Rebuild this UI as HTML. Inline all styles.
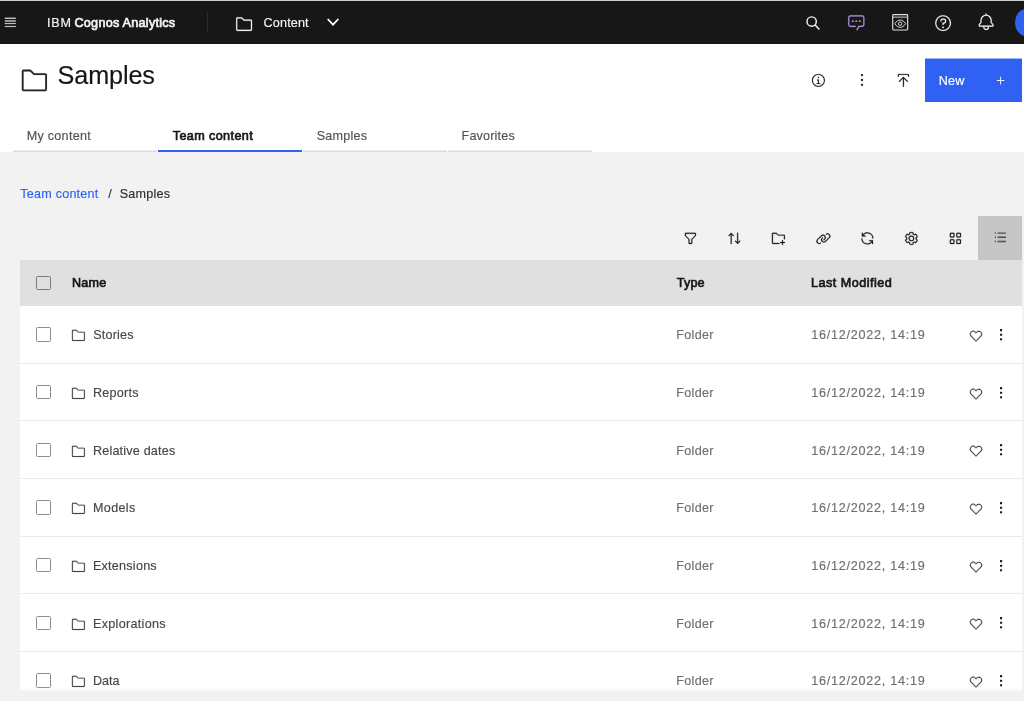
<!DOCTYPE html>
<html lang="en">
<head>
<meta charset="utf-8">
<title>Samples - IBM Cognos Analytics</title>
<style>
*{box-sizing:border-box;margin:0;padding:0}
html,body{width:1024px;height:701px;overflow:hidden;background:#f2f2f2;font-family:"Liberation Sans",sans-serif;color:#161616}
body{position:relative}
svg{display:block;position:absolute;fill:currentColor;overflow:visible}
.t{position:absolute;white-space:nowrap;line-height:1}
.b{position:absolute}
.cb{position:absolute;left:36px;width:14.8px;height:14.3px;border:1px solid #8d8d8d;border-radius:1.5px;background:#fff}
</style>
</head>
<body>
<div class="b" style="left:0;top:0;width:1024px;height:1.2px;background:#cfcfcf"></div>
<div class="b" id="hdr" style="left:0;top:1.2px;width:1024px;height:42.4px;background:#171717"></div>
<div class="b" id="white" style="left:0;top:43.6px;width:1024px;height:108.4px;background:#fff"></div>
<div class="b" style="left:207.3px;top:11.9px;width:1px;height:21px;background:#2c2c2c"></div>
<svg viewBox="0 0 32 32" width="14.6" height="14.6" style="left:3.35px;top:15.20px;color:#f4f4f4;stroke:currentColor;stroke-width:0.3"><path d="M4 6H28V8H4zM4 24H28V26H4zM4 12H28V14H4zM4 18H28V20H4z"/></svg>
<svg viewBox="0 0 32 32" width="18.2" height="18.2" style="left:234.80px;top:14.55px;color:#f4f4f4;stroke:currentColor;stroke-width:0.3"><path d="M11.1716,6l3.4142,3.4142L15.1716,10H28V26H4V6h7.1716m0-2H4A2,2,0,0,0,2,6V26a2,2,0,0,0,2,2H28a2,2,0,0,0,2-2V10a2,2,0,0,0-2-2H16L12.5858,4.5858A2,2,0,0,0,11.1716,4Z"/></svg>
<svg viewBox="0 0 14 10" width="14" height="10" style="left:326px;top:17.3px;color:#fff;fill:none"><polyline points="1.7,2 7,7.6 12.3,2" stroke="currentColor" stroke-width="1.8" fill="none"/></svg>
<svg viewBox="0 0 16 16" width="16" height="16" style="left:805px;top:14.5px;color:#f4f4f4;fill:none"><circle cx="6.65" cy="6.5" r="4.65" stroke="currentColor" stroke-width="1.45" fill="none"/><line x1="9.9" y1="9.8" x2="14.4" y2="14.4" stroke="currentColor" stroke-width="1.5"/></svg>
<svg viewBox="0 0 32 32" width="18.6" height="18.6" style="left:847.10px;top:13.00px;color:#ab93dc;stroke:currentColor;stroke-width:0.3"><path d="M17.74,30,16,29l4-7h6a2,2,0,0,0,2-2V8a2,2,0,0,0-2-2H6A2,2,0,0,0,4,8V20a2,2,0,0,0,2,2h9v2H6a4,4,0,0,1-4-4V8A4,4,0,0,1,6,4H26a4,4,0,0,1,4,4V20a4,4,0,0,1-4,4H21.16Z"/><circle cx="10" cy="14" r="1.6"/><circle cx="16" cy="14" r="1.6"/><circle cx="22" cy="14" r="1.6"/></svg>
<svg viewBox="0 0 32 32" width="18.4" height="18.4" style="left:890.80px;top:13.40px;color:#e0e0e0;stroke:currentColor;stroke-width:0.5"><g fill="none" stroke="currentColor" stroke-width="2"><rect x="3" y="2.8" width="26" height="26.7" rx="1.5"/><line x1="3" y1="7.2" x2="29" y2="7.2" stroke-width="1.6"/><path d="M6.6 18.6C9.5 13.8 13 12.3 16 12.3S22.5 13.8 25.4 18.6C22.5 23.4 19 24.900 16 24.900S9.5 23.4 6.6 18.600Z" stroke-width="1.7"/><circle cx="16" cy="18.6" r="3" stroke-width="1.7"/></g></svg>
<svg viewBox="0 0 32 32" width="18.2" height="18.2" style="left:933.90px;top:13.75px;color:#f4f4f4;stroke:currentColor;stroke-width:0.2"><path d="M16,2A14,14,0,1,0,30,16,14,14,0,0,0,16,2Zm0,26A12,12,0,1,1,28,16,12,12,0,0,1,16,28Z"/><circle cx="16" cy="23.5" r="1.5"/><path d="M17,8H15.5A4.49,4.49,0,0,0,11,12.5V13h2v-.5A2.5,2.5,0,0,1,15.5,10H17a2.5,2.5,0,0,1,0,5H15v4.5h2V17a4.5,4.5,0,0,0,0-9Z"/></svg>
<svg viewBox="0 0 32 32" width="18.2" height="18.2" style="left:976.70px;top:13.45px;color:#f4f4f4;stroke:currentColor;stroke-width:0.2"><path d="M28.7071,19.293,26,16.5859V13a10.0136,10.0136,0,0,0-9-9.9492V1H15V3.0508A10.0136,10.0136,0,0,0,6,13v3.5859L3.2929,19.293A1,1,0,0,0,3,20v3a1,1,0,0,0,1,1h7v.7768a5.152,5.152,0,0,0,4.5,5.1987A5.0057,5.0057,0,0,0,21,25V24h7a1,1,0,0,0,1-1V20A1,1,0,0,0,28.7071,19.293ZM19,25a3,3,0,0,1-6,0V24h6Zm8-3H5V20.4141L7.707,17.707A1,1,0,0,0,8,17V13a8,8,0,0,1,16,0v4a1,1,0,0,0,.293.707L27,20.4141Z"/></svg>
<div class="b" style="left:1014.7px;top:7.9px;width:28.8px;height:28.8px;border-radius:50%;background:#2f62f3"></div>
<svg viewBox="0 0 32 32" width="28.8" height="28.8" style="left:20.05px;top:65.65px;color:#262626;stroke:currentColor;stroke-width:0.1"><path d="M11.1716,6l3.4142,3.4142L15.1716,10H28V26H4V6h7.1716m0-2H4A2,2,0,0,0,2,6V26a2,2,0,0,0,2,2H28a2,2,0,0,0,2-2V10a2,2,0,0,0-2-2H16L12.5858,4.5858A2,2,0,0,0,11.1716,4Z"/></svg>
<svg viewBox="0 0 32 32" width="14.8" height="14.8" style="left:811.20px;top:72.90px;color:#161616;stroke:currentColor;stroke-width:0.3"><path d="M17 22L17 14 13 14 13 16 15 16 15 22 12 22 12 24 20 24 20 22 17 22zM16 8a1.5 1.5 0 1 0 1.5 1.5A1.5 1.5 0 0 0 16 8z"/><path d="M16,30A14,14,0,1,1,30,16,14,14,0,0,1,16,30ZM16,4A12,12,0,1,0,28,16,12,12,0,0,0,16,4Z"/></svg>
<svg viewBox="0 0 4 14" width="4" height="14" style="left:859.9px;top:73.2px;color:#161616"><circle cx="2" cy="2.1" r="1.15"/><circle cx="2" cy="7.0" r="1.15"/><circle cx="2" cy="11.8" r="1.15"/></svg>
<svg viewBox="0 0 32 32" width="14.8" height="14.8" style="left:896.10px;top:72.90px;color:#161616;stroke:currentColor;stroke-width:0.5"><path d="M6 18L7.41 19.41 15 11.83 15 30 17 30 17 11.83 24.59 19.41 26 18 16 8 6 18zM6 8V4H26V8h2V4a2 2 0 0 0-2-2H6A2 2 0 0 0 4 4V8z"/></svg>
<svg viewBox="0 0 97 45" width="97" height="45" style="left:925px;top:58px;color:#2f62f3"><rect x="0" y="0.55" width="97" height="43.45"/></svg>
<svg viewBox="0 0 32 32" width="15.2" height="15.2" style="left:992.50px;top:72.80px;color:#f0f3ff;stroke:currentColor;stroke-width:0"><path d="M17 15L17 8 15 8 15 15 8 15 8 17 15 17 15 24 17 24 17 17 24 17 24 15z"/></svg>
<div class="b" style="left:13px;top:150px;width:144px;height:1px;background:#f1f1f1"></div><div class="b" style="left:13px;top:151px;width:144px;height:1px;background:#d9d9d9"></div>
<div class="b" style="left:158px;top:150px;width:144px;height:2px;background:#2f62f3"></div>
<div class="b" style="left:303px;top:150px;width:144px;height:1px;background:#f1f1f1"></div><div class="b" style="left:303px;top:151px;width:144px;height:1px;background:#d9d9d9"></div>
<div class="b" style="left:448px;top:150px;width:144px;height:1px;background:#f1f1f1"></div><div class="b" style="left:448px;top:151px;width:144px;height:1px;background:#d9d9d9"></div>
<div class="b" style="left:978px;top:216px;width:44px;height:44px;background:#c6c6c6"></div>
<svg viewBox="0 0 32 32" width="14.8" height="14.8" style="left:683.10px;top:230.50px;color:#161616;stroke:currentColor;stroke-width:0.5"><path d="M18,28H14a2,2,0,0,1-2-2V18.41L4.59,11A2,2,0,0,1,4,9.59V6A2,2,0,0,1,6,4H26a2,2,0,0,1,2,2V9.59A2,2,0,0,1,27.41,11L20,18.41V26A2,2,0,0,1,18,28ZM6,6V9.59l8,8V26h4V17.59l8-8V6Z"/></svg>
<svg viewBox="0 0 32 32" width="14.8" height="14.8" style="left:727.20px;top:230.50px;color:#161616;stroke:currentColor;stroke-width:0.5"><path d="M27.6 20.6L24 24.2 24 4 22 4 22 24.2 18.4 20.6 17 22 23 28 29 22zM9 4L3 10 4.4 11.4 8 7.8 8 28 10 28 10 7.8 13.6 11.4 15 10z"/></svg>
<svg viewBox="0 0 32 32" width="14.8" height="14.8" style="left:771.40px;top:230.50px;color:#161616;stroke:currentColor;stroke-width:0.5"><path d="M26 20L24 20 24 24 20 24 20 26 24 26 24 30 26 30 26 26 30 26 30 24 26 24z"/><path d="M28,8H16l-3.4-3.4C12.2,4.2,11.7,4,11.2,4H4C2.9,4,2,4.9,2,6v20c0,1.1,0.9,2,2,2h14v-2H4V6h7.2l3.4,3.4l0.6,0.6H28v8h2v-8C30,8.9,29.1,8,28,8z"/></svg>
<svg viewBox="0 0 32 32" width="14.8" height="14.8" style="left:815.70px;top:230.50px;color:#161616;stroke:currentColor;stroke-width:0.5"><path d="M29.25,6.76a6,6,0,0,0-8.5,0l1.42,1.42a4,4,0,1,1,5.67,5.67l-8,8a4,4,0,1,1-5.67-5.66l1.41-1.42-1.41-1.42-1.42,1.42a6,6,0,0,0,0,8.5A6,6,0,0,0,17,25a6,6,0,0,0,4.27-1.76l8-8A6,6,0,0,0,29.25,6.76Z"/><path d="M4.19,24.82a4,4,0,0,1,0-5.67l8-8a4,4,0,0,1,5.67,0A3.94,3.94,0,0,1,19,14a4,4,0,0,1-1.17,2.85L15.71,19l1.42,1.42,2.12-2.12a6,6,0,0,0-8.51-8.51l-8,8a6,6,0,0,0,0,8.51A6,6,0,0,0,7,28a6.07,6.07,0,0,0,4.28-1.76L9.86,24.82A4,4,0,0,1,4.19,24.82Z"/></svg>
<svg viewBox="0 0 32 32" width="14.8" height="14.8" style="left:860.10px;top:230.50px;color:#161616;stroke:currentColor;stroke-width:0.5"><path d="M12 10H6.78A11 11 0 0 1 27 16h2A13 13 0 0 0 6 7.68V4H4v8h8zM20 22h5.22A11 11 0 0 1 5 16H3a13 13 0 0 0 23 8.32V28h2V20H20z"/></svg>
<svg viewBox="0 0 32 32" width="14.8" height="14.8" style="left:904.30px;top:230.50px;color:#161616;stroke:currentColor;stroke-width:0.5"><path d="M27,16.76c0-.25,0-.5,0-.76s0-.51,0-.77l1.92-1.68A2,2,0,0,0,29.3,11L26.94,7a2,2,0,0,0-1.73-1,2,2,0,0,0-.64.1l-2.43.82a11.35,11.35,0,0,0-1.31-.75l-.51-2.52a2,2,0,0,0-2-1.61H13.64a2,2,0,0,0-2,1.61l-.51,2.52a11.48,11.48,0,0,0-1.32.75L7.43,6.06A2,2,0,0,0,6.79,6,2,2,0,0,0,5.06,7L2.7,11a2,2,0,0,0,.41,2.51L5,15.24c0,.25,0,.5,0,.76s0,.51,0,.77L3.11,18.45A2,2,0,0,0,2.7,21L5.06,25a2,2,0,0,0,1.73,1,2,2,0,0,0,.64-.1l2.43-.82a11.35,11.35,0,0,0,1.31.75l.51,2.52a2,2,0,0,0,2,1.61h4.72a2,2,0,0,0,2-1.61l.51-2.52a11.48,11.48,0,0,0,1.32-.75l2.42.82a2,2,0,0,0,.64.1,2,2,0,0,0,1.73-1L29.3,21a2,2,0,0,0-.41-2.51ZM25.21,24l-3.43-1.16a8.86,8.86,0,0,1-2.71,1.57L18.36,28H13.64l-.71-3.55a9.36,9.36,0,0,1-2.7-1.57L6.79,24,4.43,20l2.72-2.4a8.9,8.9,0,0,1,0-3.13L4.43,12,6.79,8l3.43,1.16a8.86,8.86,0,0,1,2.71-1.57L13.64,4h4.72l.71,3.55a9.36,9.36,0,0,1,2.7,1.57L25.21,8,27.57,12l-2.72,2.4a8.9,8.9,0,0,1,0,3.13L27.57,20Z"/><path d="M16,22a6,6,0,1,1,6-6A5.94,5.94,0,0,1,16,22Zm0-10a3.91,3.91,0,0,0-4,4,3.91,3.91,0,0,0,4,4,3.91,3.91,0,0,0,4-4A3.91,3.91,0,0,0,16,12Z"/></svg>
<svg viewBox="0 0 32 32" width="14.8" height="14.8" style="left:948.20px;top:230.50px;color:#161616;stroke:currentColor;stroke-width:0.5"><path d="M12 4H6A2 2 0 0 0 4 6v6a2 2 0 0 0 2 2h6a2 2 0 0 0 2-2V6A2 2 0 0 0 12 4zm0 8H6V6h6zM26 4H20a2 2 0 0 0-2 2v6a2 2 0 0 0 2 2h6a2 2 0 0 0 2-2V6A2 2 0 0 0 26 4zm0 8H20V6h6zM12 18H6a2 2 0 0 0-2 2v6a2 2 0 0 0 2 2h6a2 2 0 0 0 2-2V20A2 2 0 0 0 12 18zm0 8H6V20h6zM26 18H20a2 2 0 0 0-2 2v6a2 2 0 0 0 2 2h6a2 2 0 0 0 2-2V20A2 2 0 0 0 26 18zm0 8H20V20h6z"/></svg>
<svg viewBox="0 0 32 32" width="14.8" height="14.8" style="left:992.70px;top:230.35px;color:#555555;stroke:currentColor;stroke-width:0.2"><path d="M10 5.300H28V8.300H10zM10 23.300H28V26.300H10zM10 14.300H28V17.300H10zM4 14.300H6.400V17.300H4zM4 5.300H6.400V8.300H4zM4 23.300H6.400V26.300H4z"/></svg>
<div class="b" id="tbl" style="left:20px;top:260px;width:1002px;height:431.2px;background:#fff"></div>
<div class="b" id="thead" style="left:20px;top:260px;width:1002px;height:45.6px;background:#e0e0e0"></div>
<div class="cb" style="top:275.7px;background:transparent;border-color:#7a7a7a"></div>
<div class="cb" style="top:327.43px"></div>
<svg viewBox="0 0 32 32" width="14.8" height="14.8" style="left:71.25px;top:328.33px;color:#454545;stroke:currentColor;stroke-width:0.35"><path d="M11.1716,6l3.4142,3.4142L15.1716,10H28V26H4V6h7.1716m0-2H4A2,2,0,0,0,2,6V26a2,2,0,0,0,2,2H28a2,2,0,0,0,2-2V10a2,2,0,0,0-2-2H16L12.5858,4.5858A2,2,0,0,0,11.1716,4Z"/></svg>
<svg viewBox="0 0 32 32" width="14" height="14" style="left:969.00px;top:329.12px;color:#454545;stroke:currentColor;stroke-width:0.35"><path d="M22.45,6a5.47,5.47,0,0,1,3.91,1.64,5.7,5.7,0,0,1,0,8L16,26.13,5.64,15.64a5.7,5.7,0,0,1,0-8,5.48,5.48,0,0,1,7.82,0L16,10.24l2.53-2.58A5.44,5.44,0,0,1,22.45,6m0-2a7.47,7.47,0,0,0-5.340,2.240L16,7.360,14.890,6.240a7.490,7.490,0,0,0-10.680,0,7.720,7.720,0,0,0,0,10.820L16,29,27.790,17.060a7.720,7.720,0,0,0,0-10.820A7.490,7.490,0,0,0,22.450,4Z"/></svg>
<svg viewBox="0 0 4 14" width="4" height="14" style="left:999px;top:328.03px;color:#161616"><rect x="1" y="1.1" width="2.1" height="2.1" rx=".5"/><rect x="1" y="5.7" width="2.1" height="2.1" rx=".5"/><rect x="1" y="10.2" width="2.1" height="2.1" rx=".5"/></svg>
<div class="b" style="left:20px;top:362.65px;width:1002px;height:1.1px;background:#e9e9e9"></div>
<div class="cb" style="top:385.07px"></div>
<svg viewBox="0 0 32 32" width="14.8" height="14.8" style="left:71.25px;top:385.98px;color:#454545;stroke:currentColor;stroke-width:0.35"><path d="M11.1716,6l3.4142,3.4142L15.1716,10H28V26H4V6h7.1716m0-2H4A2,2,0,0,0,2,6V26a2,2,0,0,0,2,2H28a2,2,0,0,0,2-2V10a2,2,0,0,0-2-2H16L12.5858,4.5858A2,2,0,0,0,11.1716,4Z"/></svg>
<svg viewBox="0 0 32 32" width="14" height="14" style="left:969.00px;top:386.77px;color:#454545;stroke:currentColor;stroke-width:0.35"><path d="M22.45,6a5.47,5.47,0,0,1,3.91,1.64,5.7,5.7,0,0,1,0,8L16,26.13,5.64,15.64a5.7,5.7,0,0,1,0-8,5.48,5.48,0,0,1,7.82,0L16,10.24l2.53-2.58A5.44,5.44,0,0,1,22.45,6m0-2a7.47,7.47,0,0,0-5.340,2.240L16,7.360,14.890,6.240a7.490,7.490,0,0,0-10.680,0,7.720,7.720,0,0,0,0,10.820L16,29,27.790,17.060a7.720,7.720,0,0,0,0-10.820A7.490,7.490,0,0,0,22.450,4Z"/></svg>
<svg viewBox="0 0 4 14" width="4" height="14" style="left:999px;top:385.68px;color:#161616"><rect x="1" y="1.1" width="2.1" height="2.1" rx=".5"/><rect x="1" y="5.7" width="2.1" height="2.1" rx=".5"/><rect x="1" y="10.2" width="2.1" height="2.1" rx=".5"/></svg>
<div class="b" style="left:20px;top:420.30px;width:1002px;height:1.1px;background:#e9e9e9"></div>
<div class="cb" style="top:442.73px"></div>
<svg viewBox="0 0 32 32" width="14.8" height="14.8" style="left:71.25px;top:443.63px;color:#454545;stroke:currentColor;stroke-width:0.35"><path d="M11.1716,6l3.4142,3.4142L15.1716,10H28V26H4V6h7.1716m0-2H4A2,2,0,0,0,2,6V26a2,2,0,0,0,2,2H28a2,2,0,0,0,2-2V10a2,2,0,0,0-2-2H16L12.5858,4.5858A2,2,0,0,0,11.1716,4Z"/></svg>
<svg viewBox="0 0 32 32" width="14" height="14" style="left:969.00px;top:444.43px;color:#454545;stroke:currentColor;stroke-width:0.35"><path d="M22.45,6a5.47,5.47,0,0,1,3.91,1.64,5.7,5.7,0,0,1,0,8L16,26.13,5.64,15.64a5.7,5.7,0,0,1,0-8,5.48,5.48,0,0,1,7.82,0L16,10.24l2.53-2.58A5.44,5.44,0,0,1,22.45,6m0-2a7.47,7.47,0,0,0-5.340,2.240L16,7.360,14.890,6.240a7.490,7.490,0,0,0-10.680,0,7.720,7.720,0,0,0,0,10.820L16,29,27.790,17.060a7.720,7.720,0,0,0,0-10.820A7.490,7.490,0,0,0,22.450,4Z"/></svg>
<svg viewBox="0 0 4 14" width="4" height="14" style="left:999px;top:443.33px;color:#161616"><rect x="1" y="1.1" width="2.1" height="2.1" rx=".5"/><rect x="1" y="5.7" width="2.1" height="2.1" rx=".5"/><rect x="1" y="10.2" width="2.1" height="2.1" rx=".5"/></svg>
<div class="b" style="left:20px;top:477.95px;width:1002px;height:1.1px;background:#e9e9e9"></div>
<div class="cb" style="top:500.38px"></div>
<svg viewBox="0 0 32 32" width="14.8" height="14.8" style="left:71.25px;top:501.28px;color:#454545;stroke:currentColor;stroke-width:0.35"><path d="M11.1716,6l3.4142,3.4142L15.1716,10H28V26H4V6h7.1716m0-2H4A2,2,0,0,0,2,6V26a2,2,0,0,0,2,2H28a2,2,0,0,0,2-2V10a2,2,0,0,0-2-2H16L12.5858,4.5858A2,2,0,0,0,11.1716,4Z"/></svg>
<svg viewBox="0 0 32 32" width="14" height="14" style="left:969.00px;top:502.07px;color:#454545;stroke:currentColor;stroke-width:0.35"><path d="M22.45,6a5.47,5.47,0,0,1,3.91,1.64,5.7,5.7,0,0,1,0,8L16,26.13,5.64,15.64a5.7,5.7,0,0,1,0-8,5.48,5.48,0,0,1,7.82,0L16,10.24l2.53-2.58A5.44,5.44,0,0,1,22.45,6m0-2a7.47,7.47,0,0,0-5.340,2.240L16,7.360,14.890,6.240a7.490,7.490,0,0,0-10.680,0,7.720,7.720,0,0,0,0,10.820L16,29,27.790,17.060a7.720,7.720,0,0,0,0-10.820A7.490,7.490,0,0,0,22.450,4Z"/></svg>
<svg viewBox="0 0 4 14" width="4" height="14" style="left:999px;top:500.98px;color:#161616"><rect x="1" y="1.1" width="2.1" height="2.1" rx=".5"/><rect x="1" y="5.7" width="2.1" height="2.1" rx=".5"/><rect x="1" y="10.2" width="2.1" height="2.1" rx=".5"/></svg>
<div class="b" style="left:20px;top:535.60px;width:1002px;height:1.1px;background:#e9e9e9"></div>
<div class="cb" style="top:558.03px"></div>
<svg viewBox="0 0 32 32" width="14.8" height="14.8" style="left:71.25px;top:558.93px;color:#454545;stroke:currentColor;stroke-width:0.35"><path d="M11.1716,6l3.4142,3.4142L15.1716,10H28V26H4V6h7.1716m0-2H4A2,2,0,0,0,2,6V26a2,2,0,0,0,2,2H28a2,2,0,0,0,2-2V10a2,2,0,0,0-2-2H16L12.5858,4.5858A2,2,0,0,0,11.1716,4Z"/></svg>
<svg viewBox="0 0 32 32" width="14" height="14" style="left:969.00px;top:559.73px;color:#454545;stroke:currentColor;stroke-width:0.35"><path d="M22.45,6a5.47,5.47,0,0,1,3.91,1.64,5.7,5.7,0,0,1,0,8L16,26.13,5.64,15.64a5.7,5.7,0,0,1,0-8,5.48,5.48,0,0,1,7.82,0L16,10.24l2.53-2.58A5.44,5.44,0,0,1,22.45,6m0-2a7.47,7.47,0,0,0-5.340,2.240L16,7.360,14.890,6.240a7.490,7.490,0,0,0-10.680,0,7.720,7.720,0,0,0,0,10.820L16,29,27.790,17.060a7.720,7.720,0,0,0,0-10.820A7.490,7.490,0,0,0,22.450,4Z"/></svg>
<svg viewBox="0 0 4 14" width="4" height="14" style="left:999px;top:558.62px;color:#161616"><rect x="1" y="1.1" width="2.1" height="2.1" rx=".5"/><rect x="1" y="5.7" width="2.1" height="2.1" rx=".5"/><rect x="1" y="10.2" width="2.1" height="2.1" rx=".5"/></svg>
<div class="b" style="left:20px;top:593.25px;width:1002px;height:1.1px;background:#e9e9e9"></div>
<div class="cb" style="top:615.68px"></div>
<svg viewBox="0 0 32 32" width="14.8" height="14.8" style="left:71.25px;top:616.58px;color:#454545;stroke:currentColor;stroke-width:0.35"><path d="M11.1716,6l3.4142,3.4142L15.1716,10H28V26H4V6h7.1716m0-2H4A2,2,0,0,0,2,6V26a2,2,0,0,0,2,2H28a2,2,0,0,0,2-2V10a2,2,0,0,0-2-2H16L12.5858,4.5858A2,2,0,0,0,11.1716,4Z"/></svg>
<svg viewBox="0 0 32 32" width="14" height="14" style="left:969.00px;top:617.38px;color:#454545;stroke:currentColor;stroke-width:0.35"><path d="M22.45,6a5.47,5.47,0,0,1,3.91,1.64,5.7,5.7,0,0,1,0,8L16,26.13,5.64,15.64a5.7,5.7,0,0,1,0-8,5.48,5.48,0,0,1,7.82,0L16,10.24l2.53-2.58A5.44,5.44,0,0,1,22.45,6m0-2a7.47,7.47,0,0,0-5.340,2.240L16,7.360,14.890,6.240a7.490,7.490,0,0,0-10.680,0,7.720,7.720,0,0,0,0,10.820L16,29,27.790,17.060a7.720,7.720,0,0,0,0-10.820A7.490,7.490,0,0,0,22.450,4Z"/></svg>
<svg viewBox="0 0 4 14" width="4" height="14" style="left:999px;top:616.27px;color:#161616"><rect x="1" y="1.1" width="2.1" height="2.1" rx=".5"/><rect x="1" y="5.7" width="2.1" height="2.1" rx=".5"/><rect x="1" y="10.2" width="2.1" height="2.1" rx=".5"/></svg>
<div class="b" style="left:20px;top:650.90px;width:1002px;height:1.1px;background:#e9e9e9"></div>
<div class="cb" style="top:673.33px"></div>
<svg viewBox="0 0 32 32" width="14.8" height="14.8" style="left:71.25px;top:674.23px;color:#454545;stroke:currentColor;stroke-width:0.35"><path d="M11.1716,6l3.4142,3.4142L15.1716,10H28V26H4V6h7.1716m0-2H4A2,2,0,0,0,2,6V26a2,2,0,0,0,2,2H28a2,2,0,0,0,2-2V10a2,2,0,0,0-2-2H16L12.5858,4.5858A2,2,0,0,0,11.1716,4Z"/></svg>
<svg viewBox="0 0 32 32" width="14" height="14" style="left:969.00px;top:675.03px;color:#454545;stroke:currentColor;stroke-width:0.35"><path d="M22.45,6a5.47,5.47,0,0,1,3.91,1.64,5.7,5.7,0,0,1,0,8L16,26.13,5.64,15.64a5.7,5.7,0,0,1,0-8,5.48,5.48,0,0,1,7.82,0L16,10.24l2.53-2.58A5.44,5.44,0,0,1,22.45,6m0-2a7.47,7.47,0,0,0-5.340,2.240L16,7.360,14.890,6.240a7.490,7.490,0,0,0-10.680,0,7.720,7.720,0,0,0,0,10.820L16,29,27.790,17.060a7.720,7.720,0,0,0,0-10.820A7.490,7.490,0,0,0,22.450,4Z"/></svg>
<svg viewBox="0 0 4 14" width="4" height="14" style="left:999px;top:673.92px;color:#161616"><rect x="1" y="1.1" width="2.1" height="2.1" rx=".5"/><rect x="1" y="5.7" width="2.1" height="2.1" rx=".5"/><rect x="1" y="10.2" width="2.1" height="2.1" rx=".5"/></svg>
<div id="txt" style="position:absolute;left:0;top:0;width:1024px;height:701px;will-change:transform">
<div class="t" id="brand1" style="left:46.96px;top:16.88px;font-size:12.6px;font-weight:400;-webkit-text-stroke:0.16px currentColor;color:#f4f4f4;letter-spacing:0.875px">IBM</div>
<div class="t" id="brand2" style="left:74.46px;top:16.88px;font-size:12.6px;font-weight:400;-webkit-text-stroke:0.68px currentColor;color:#f4f4f4;letter-spacing:0.274px">Cognos Analytics</div>
<div class="t" id="ctx" style="left:263.60px;top:16.88px;font-size:12.6px;font-weight:400;-webkit-text-stroke:0.16px currentColor;color:#f4f4f4;letter-spacing:0.146px">Content</div>
<div class="t" id="h1" style="left:57.60px;top:63.12px;font-size:25.2px;font-weight:400;-webkit-text-stroke:0.16px currentColor;color:#161616;letter-spacing:-0.108px">Samples</div>
<div class="t" id="new" style="left:938.74px;top:74.78px;font-size:12.6px;font-weight:400;-webkit-text-stroke:0.16px currentColor;color:#ffffff;letter-spacing:0.200px">New</div>
<div class="t" id="tab1" style="left:26.77px;top:129.78px;font-size:12.6px;font-weight:400;-webkit-text-stroke:0.16px currentColor;color:#525252;letter-spacing:0.254px">My content</div>
<div class="t" id="tab2" style="left:172.78px;top:129.78px;font-size:12.6px;font-weight:400;-webkit-text-stroke:0.68px currentColor;color:#161616;letter-spacing:0.393px">Team content</div>
<div class="t" id="tab3" style="left:316.78px;top:129.78px;font-size:12.6px;font-weight:400;-webkit-text-stroke:0.16px currentColor;color:#525252;letter-spacing:0.200px">Samples</div>
<div class="t" id="tab4" style="left:461.56px;top:129.78px;font-size:12.6px;font-weight:400;-webkit-text-stroke:0.16px currentColor;color:#525252;letter-spacing:0.173px">Favorites</div>
<div class="t" id="bc1" style="left:20.24px;top:187.68px;font-size:12.6px;font-weight:400;-webkit-text-stroke:0.16px currentColor;color:#2f62f3;letter-spacing:0.221px">Team content</div>
<div class="t" id="bc2" style="left:108.19px;top:187.68px;font-size:12.6px;font-weight:400;-webkit-text-stroke:0.16px currentColor;color:#333333;letter-spacing:0.000px">/</div>
<div class="t" id="bc3" style="left:119.77px;top:187.68px;font-size:12.6px;font-weight:400;-webkit-text-stroke:0.16px currentColor;color:#2e2e2e;letter-spacing:0.195px">Samples</div>
<div class="t" id="th1" style="left:71.97px;top:277.43px;font-size:12.6px;font-weight:400;-webkit-text-stroke:0.68px currentColor;color:#161616;letter-spacing:0.256px">Name</div>
<div class="t" id="th2" style="left:676.78px;top:277.43px;font-size:12.6px;font-weight:400;-webkit-text-stroke:0.68px currentColor;color:#161616;letter-spacing:0.167px">Type</div>
<div class="t" id="th3" style="left:811.05px;top:277.43px;font-size:12.6px;font-weight:400;-webkit-text-stroke:0.68px currentColor;color:#161616;letter-spacing:0.487px">Last Modified</div>
<div class="t" id="n0" style="left:93.23px;top:329.48px;font-size:12.6px;font-weight:400;-webkit-text-stroke:0.16px currentColor;color:#474747;letter-spacing:0.170px">Stories</div>
<div class="t" id="t0" style="left:676.36px;top:329.48px;font-size:12.6px;font-weight:400;-webkit-text-stroke:0.16px currentColor;color:#6f6f6f;letter-spacing:0.268px">Folder</div>
<div class="t" id="d0" style="left:811.22px;top:329.48px;font-size:12.6px;font-weight:400;-webkit-text-stroke:0.16px currentColor;color:#6f6f6f;letter-spacing:0.744px">16/12/2022, 14:19</div>
<div class="t" id="n1" style="left:92.96px;top:387.13px;font-size:12.6px;font-weight:400;-webkit-text-stroke:0.16px currentColor;color:#474747;letter-spacing:0.260px">Reports</div>
<div class="t" id="t1" style="left:676.36px;top:387.13px;font-size:12.6px;font-weight:400;-webkit-text-stroke:0.16px currentColor;color:#6f6f6f;letter-spacing:0.268px">Folder</div>
<div class="t" id="d1" style="left:811.22px;top:387.13px;font-size:12.6px;font-weight:400;-webkit-text-stroke:0.16px currentColor;color:#6f6f6f;letter-spacing:0.744px">16/12/2022, 14:19</div>
<div class="t" id="n2" style="left:92.96px;top:444.78px;font-size:12.6px;font-weight:400;-webkit-text-stroke:0.16px currentColor;color:#474747;letter-spacing:0.187px">Relative dates</div>
<div class="t" id="t2" style="left:676.36px;top:444.78px;font-size:12.6px;font-weight:400;-webkit-text-stroke:0.16px currentColor;color:#6f6f6f;letter-spacing:0.268px">Folder</div>
<div class="t" id="d2" style="left:811.22px;top:444.78px;font-size:12.6px;font-weight:400;-webkit-text-stroke:0.16px currentColor;color:#6f6f6f;letter-spacing:0.744px">16/12/2022, 14:19</div>
<div class="t" id="n3" style="left:92.96px;top:502.43px;font-size:12.6px;font-weight:400;-webkit-text-stroke:0.16px currentColor;color:#474747;letter-spacing:0.349px">Models</div>
<div class="t" id="t3" style="left:676.36px;top:502.43px;font-size:12.6px;font-weight:400;-webkit-text-stroke:0.16px currentColor;color:#6f6f6f;letter-spacing:0.268px">Folder</div>
<div class="t" id="d3" style="left:811.22px;top:502.43px;font-size:12.6px;font-weight:400;-webkit-text-stroke:0.16px currentColor;color:#6f6f6f;letter-spacing:0.744px">16/12/2022, 14:19</div>
<div class="t" id="n4" style="left:92.96px;top:560.08px;font-size:12.6px;font-weight:400;-webkit-text-stroke:0.16px currentColor;color:#474747;letter-spacing:0.234px">Extensions</div>
<div class="t" id="t4" style="left:676.36px;top:560.08px;font-size:12.6px;font-weight:400;-webkit-text-stroke:0.16px currentColor;color:#6f6f6f;letter-spacing:0.268px">Folder</div>
<div class="t" id="d4" style="left:811.22px;top:560.08px;font-size:12.6px;font-weight:400;-webkit-text-stroke:0.16px currentColor;color:#6f6f6f;letter-spacing:0.744px">16/12/2022, 14:19</div>
<div class="t" id="n5" style="left:92.96px;top:617.73px;font-size:12.6px;font-weight:400;-webkit-text-stroke:0.16px currentColor;color:#474747;letter-spacing:0.309px">Explorations</div>
<div class="t" id="t5" style="left:676.36px;top:617.73px;font-size:12.6px;font-weight:400;-webkit-text-stroke:0.16px currentColor;color:#6f6f6f;letter-spacing:0.268px">Folder</div>
<div class="t" id="d5" style="left:811.22px;top:617.73px;font-size:12.6px;font-weight:400;-webkit-text-stroke:0.16px currentColor;color:#6f6f6f;letter-spacing:0.744px">16/12/2022, 14:19</div>
<div class="t" id="n6" style="left:92.96px;top:675.38px;font-size:12.6px;font-weight:400;-webkit-text-stroke:0.16px currentColor;color:#474747;letter-spacing:-0.014px">Data</div>
<div class="t" id="t6" style="left:676.36px;top:675.38px;font-size:12.6px;font-weight:400;-webkit-text-stroke:0.16px currentColor;color:#6f6f6f;letter-spacing:0.268px">Folder</div>
<div class="t" id="d6" style="left:811.22px;top:675.38px;font-size:12.6px;font-weight:400;-webkit-text-stroke:0.16px currentColor;color:#6f6f6f;letter-spacing:0.744px">16/12/2022, 14:19</div>
</div>
<div class="b" style="left:20px;top:687px;width:1002px;height:4.2px;background:linear-gradient(to bottom,rgba(242,242,242,0),rgba(242,242,242,.55))"></div><div class="b" style="left:0;top:691.2px;width:1024px;height:10px;background:#f2f2f2"></div>
</body>
</html>
